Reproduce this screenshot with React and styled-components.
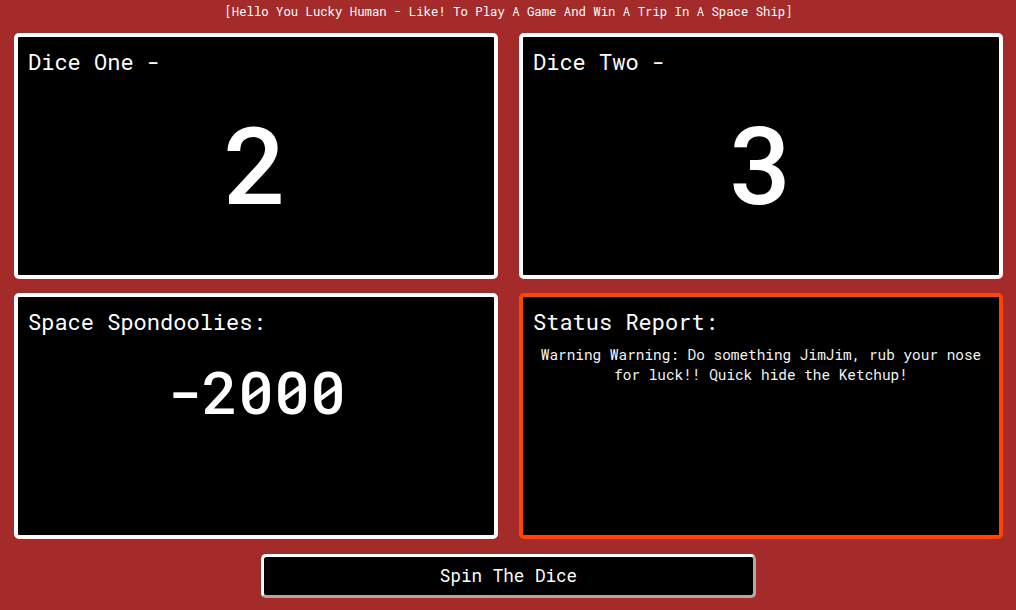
import React, { useState } from 'react'
import styled, { createGlobalStyle } from 'styled-components'

const GlobalStyle = createGlobalStyle`
  html, body {
    margin: 0;
    padding: 0;
    background: #a52a2a;
  }
  body {
    font-family: 'Roboto Mono', 'DejaVu Sans Mono', 'Liberation Mono', monospace;
    color: #fff;
  }
`

const Page = styled.main`
  padding: 0 13px 0 14px;
  display: flex;
  flex-direction: column;
`

const Banner = styled.p`
  margin: 0;
  text-align: center;
  font-size: 12.3px;
  line-height: 22px;
  color: #fff;
`

const Board = styled.section`
  margin-top: 11px;
  display: grid;
  grid-template-columns: 1fr 1fr;
  grid-template-rows: 246px 246px;
  column-gap: 21px;
  row-gap: 14px;
`

const Card = styled.div`
  box-sizing: border-box;
  background: #000;
  border: 4px solid ${(p) => (p.$alert ? '#ff4500' : '#fff')};
  border-radius: 5px;
  padding: 12px 10px;
  display: flex;
  flex-direction: column;
`

const Title = styled.h2`
  margin: 0;
  font-weight: 400;
  font-size: 22px;
  line-height: 26px;
`

const Value = styled.div`
  margin-top: ${(p) => p.$gap}px;
  text-align: center;
  font-size: ${(p) => p.$size}px;
  font-weight: 500;
  line-height: 1;
`

const Message = styled.p`
  margin: 10px 0 0;
  text-align: center;
  font-size: 14.4px;
  line-height: 20px;
  color: #f4f4f4;
`

const SpinButton = styled.button`
  box-sizing: border-box;
  margin: 15px auto 0;
  width: 495px;
  height: 44px;
  padding-bottom: 2px;
  background: #000;
  color: #fff;
  font-family: inherit;
  font-size: 17.6px;
  border-style: solid;
  border-width: 3px;
  border-color: #fff #aaa #aaa #fff;
  border-radius: 5px;
  cursor: pointer;
`

export default function App() {
  const [dice, setDice] = useState([2, 3])
  const [score, setScore] = useState(-2000)

  const spin = () => {
    const a = Math.ceil(Math.random() * 6)
    const b = Math.ceil(Math.random() * 6)
    setDice([a, b])
    setScore((s) => (a === b ? s + 1000 : s - 500))
  }

  return (
    <>
      <GlobalStyle />
      <Page>
        <Banner>
          [Hello You Lucky Human - Like! To Play A Game And Win A Trip In A Space Ship]
        </Banner>
        <Board>
          <Card>
            <Title>Dice One -</Title>
            <Value $size={108} $gap={33}>{dice[0]}</Value>
          </Card>
          <Card>
            <Title>Dice Two -</Title>
            <Value $size={108} $gap={33}>{dice[1]}</Value>
          </Card>
          <Card>
            <Title>Space Spondoolies:</Title>
            <Value $size={60} $gap={26}>{score}</Value>
          </Card>
          <Card $alert>
            <Title>Status Report:</Title>
            <Message>
              Warning Warning: Do something JimJim, rub your nose for luck!! Quick hide the
              Ketchup!
            </Message>
          </Card>
        </Board>
        <SpinButton onClick={spin}>Spin The Dice</SpinButton>
      </Page>
    </>
  )
}
